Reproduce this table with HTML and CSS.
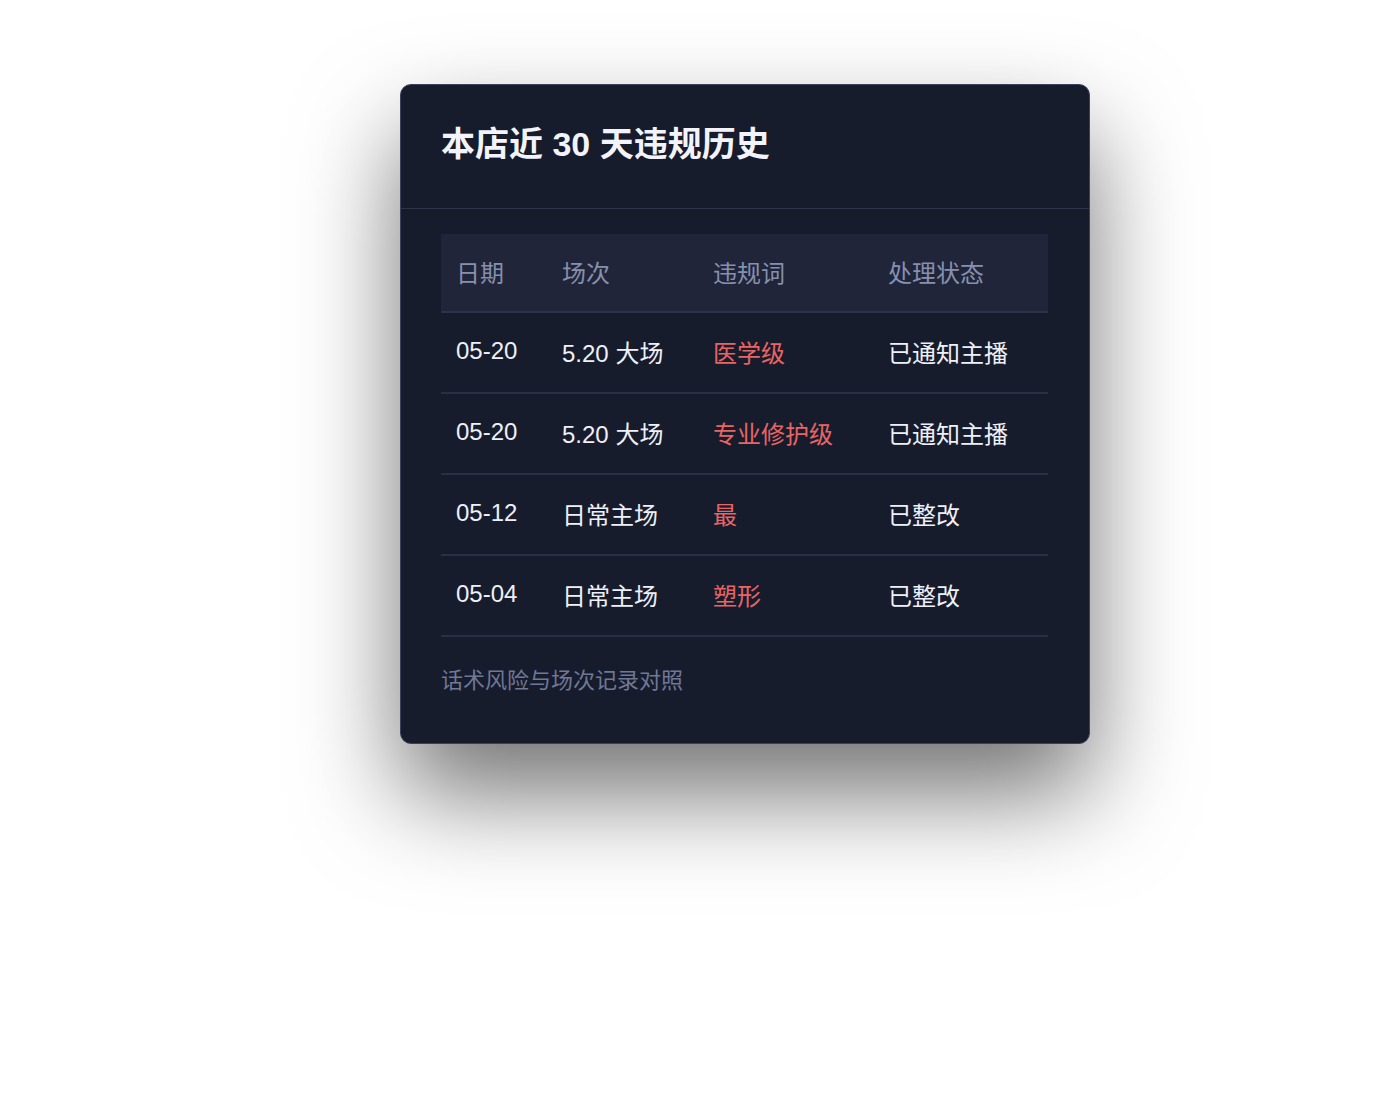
FILE: index.html
```html
<!DOCTYPE html>
<html lang="zh-CN">
<head>
<meta charset="utf-8">
<title>本店近 30 天违规历史</title>
<link rel="stylesheet" href="styles.css">
</head>
<body>
<section class="card">
  <header class="card-head">
    <h1 class="title">本店近 30 天违规历史</h1>
  </header>
  <div class="card-body">
    <table class="hist">
      <thead>
        <tr>
          <th class="c-date">日期</th>
          <th class="c-session">场次</th>
          <th class="c-word">违规词</th>
          <th class="c-status">处理状态</th>
        </tr>
      </thead>
      <tbody>
        <tr>
          <td>05-20</td>
          <td>5.20 大场</td>
          <td class="bad">医学级</td>
          <td>已通知主播</td>
        </tr>
        <tr>
          <td>05-20</td>
          <td>5.20 大场</td>
          <td class="bad">专业修护级</td>
          <td>已通知主播</td>
        </tr>
        <tr>
          <td>05-12</td>
          <td>日常主场</td>
          <td class="bad">最</td>
          <td>已整改</td>
        </tr>
        <tr>
          <td>05-04</td>
          <td>日常主场</td>
          <td class="bad">塑形</td>
          <td>已整改</td>
        </tr>
      </tbody>
    </table>
    <p class="note">话术风险与场次记录对照</p>
  </div>
</section>
</body>
</html>
```

FILE: styles.css
```css
html, body {
  margin: 0;
  padding: 0;
  background: #ffffff;
}

body {
  min-height: 1120px;
  box-sizing: border-box;
  padding: 84px 0 0 400px;
  font-family: "Liberation Sans", "Noto Sans CJK SC", sans-serif;
}

.card {
  width: 688px;
  height: 658px;
  box-sizing: content-box;
  background: #171c2c;
  border: 1px solid #3a4260;
  border-radius: 11px;
  box-shadow: 0 50px 100px rgba(0, 0, 0, 0.55);
  overflow: hidden;
}

.card-head {
  height: 123px;
  border-bottom: 1px solid #2d3447;
  padding: 0 40px;
  display: flex;
  align-items: center;
}

.title {
  margin: 0;
  font-size: 34px;
  font-weight: 700;
  color: #f3f4fb;
  line-height: 1.2;
  position: relative;
  top: -2px;
}

.card-body {
  padding: 25px 40px 0;
}

.hist {
  width: 607px;
  border-collapse: collapse;
  table-layout: fixed;
  font-size: 24px;
}

.hist th,
.hist td {
  box-sizing: border-box;
  text-align: left;
  padding: 0 0 3px 15px;
  white-space: nowrap;
}

.hist thead tr {
  background: #20253a;
  height: 78px;
}

.hist th {
  font-weight: 400;
  color: #8690ae;
  border-bottom: 2px solid #2c3347;
}

.c-date { width: 106px; }
.c-session { width: 151px; }
.c-word { width: 175px; }
.c-status { width: 175px; }

.hist tbody tr {
  height: 81px;
}

.hist td {
  color: #eef0f8;
  border-bottom: 2px solid #2a3043;
}

.hist td.bad {
  color: #e86565;
}

.note {
  margin: 28px 0 0;
  font-size: 22px;
  line-height: 32px;
  color: #6f7897;
}
```
